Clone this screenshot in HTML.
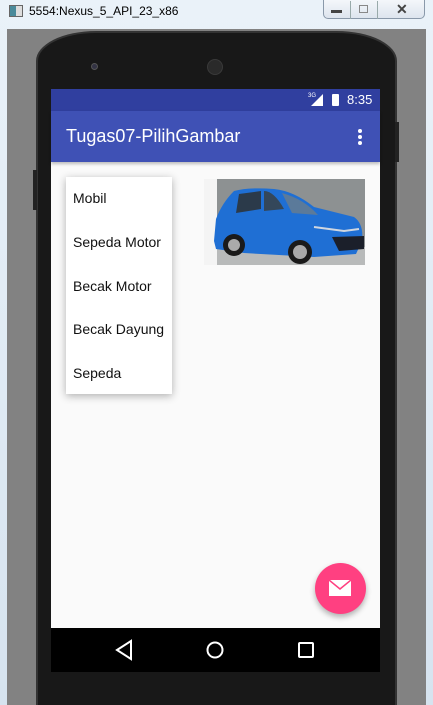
<!DOCTYPE html>
<html><head><style>
*{margin:0;padding:0;box-sizing:border-box}
html,body{width:433px;height:705px;overflow:hidden}
body{background:#dfe9f2;font-family:"Liberation Sans",sans-serif;position:relative}
.abs{position:absolute}
</style></head><body>
<div class="abs" style="left:0;top:0;width:433px;height:705px;background:linear-gradient(#eaf2f9,#d6e3ef);"></div>
<div class="abs" style="left:9px;top:5px;width:14px;height:12px;border:1px solid #666;background:linear-gradient(90deg,#4a8a9a 50%,#ddd 50%)"></div>
<div class="abs" style="left:29px;top:4px;font-size:12px;color:#000">5554:Nexus_5_API_23_x86</div>
<div class="abs" style="left:323px;top:0;width:102px;height:19px;border:1px solid #8a99aa;border-top:none;border-radius:0 0 5px 5px;background:linear-gradient(#f4f7fa,#dde5ee)"></div>
<div class="abs" style="left:350px;top:1px;width:1px;height:18px;background:#9aa"></div>
<div class="abs" style="left:377px;top:1px;width:1px;height:18px;background:#9aa"></div>
<div class="abs" style="left:331px;top:10px;width:11px;height:3px;background:#444"></div>
<div class="abs" style="left:359px;top:5px;width:9px;height:8px;border:1px solid #888"></div>
<div class="abs" style="left:396px;top:1px;font-size:14px;color:#444;font-weight:bold">✕</div>
<div class="abs" style="left:7px;top:29px;width:419px;height:676px;background:#828282"></div>
<div class="abs" style="left:36px;top:31px;width:361px;height:674px;background:#181818;border-radius:60px 60px 0 0/30px 30px 0 0;border:2px solid #333;border-bottom:none"></div>
<div class="abs" style="left:33px;top:170px;width:4px;height:40px;background:#222"></div>
<div class="abs" style="left:395px;top:122px;width:4px;height:40px;background:#222"></div>
<div class="abs" style="left:91px;top:63px;width:7px;height:7px;border-radius:50%;background:#334;border:1px solid #555"></div>
<div class="abs" style="left:207px;top:59px;width:16px;height:16px;border-radius:50%;background:#2a2a2a;border:1px solid #3a3a3a"></div>
<div class="abs" style="left:51px;top:89px;width:329px;height:539px;background:#fafafa"></div>
<div class="abs" style="left:51px;top:89px;width:329px;height:22px;background:#303f9f"></div>
<div class="abs" style="left:308px;top:93px;font-size:6px;color:#fff">3G</div>
<svg class="abs" style="left:311px;top:94px" width="12" height="12"><polygon points="12,0 12,12 0,12" fill="#fff"/></svg>
<div class="abs" style="left:332px;top:94px;width:7px;height:12px;background:#fff;border-radius:1px"></div>
<div class="abs" style="left:347px;top:92px;font-size:13px;color:#fff">8:35</div>
<div class="abs" style="left:51px;top:111px;width:329px;height:51px;background:#3f51b5;box-shadow:0 2px 3px rgba(0,0,0,.25)"></div>
<div class="abs" style="left:66px;top:126px;font-size:18px;color:#fff">Tugas07-PilihGambar</div>
<div class="abs" style="left:358px;top:129px;width:4px;height:4px;border-radius:50%;background:#fff;box-shadow:0 6px 0 #fff,0 12px 0 #fff"></div>
<div class="abs" style="left:66px;top:177px;width:106px;height:217px;background:#fff;box-shadow:0 2px 8px rgba(0,0,0,.3)"></div>
<div class="abs" style="left:73px;top:177px;font-size:14px;color:#111;line-height:43.8px">Mobil<br>Sepeda Motor<br>Becak Motor<br>Becak Dayung<br>Sepeda</div>
<svg class="abs" style="left:204px;top:179px" width="161" height="86" viewBox="0 0 161 86">
<rect width="161" height="86" fill="#f4f4f4"/>
<rect x="13" y="0" width="148" height="76" fill="#8d9192"/>
<rect x="13" y="68" width="148" height="18" fill="#b8baba"/>
<path d="M10,62 L12,40 Q18,24 30,12 Q45,8 70,10 Q90,12 110,28 L150,38 Q160,45 158,62 L152,75 L110,78 L40,74 L12,70 Z" fill="#1f6fd4"/>
<path d="M35,15 L57,12 L57,30 L32,34 Z" fill="#2b3a4a"/>
<path d="M60,12 Q70,12 80,30 L60,32 Z" fill="#34475a"/>
<path d="M78,14 Q100,20 114,36 L88,34 Z" fill="#5b7a9a"/>
<path d="M110,48 L140,52 L155,50" stroke="#cfd6e0" stroke-width="2" fill="none"/>
<circle cx="30" cy="66" r="11" fill="#1a1a1a"/><circle cx="30" cy="66" r="6" fill="#aaa"/>
<circle cx="96" cy="73" r="12" fill="#1a1a1a"/><circle cx="96" cy="73" r="7" fill="#aaa"/>
<path d="M128,58 L160,57 L160,70 L135,72 Z" fill="#1b1f2a"/>
</svg>
<div class="abs" style="left:315px;top:563px;width:51px;height:51px;border-radius:50%;background:#ff4081;box-shadow:0 3px 6px rgba(0,0,0,.3)"></div>
<svg class="abs" style="left:329px;top:580px" width="22" height="16"><rect width="22" height="16" fill="#fff"/><path d="M0,0 L11,9 L22,0" fill="none" stroke="#ff4081" stroke-width="1.5"/></svg>
<div class="abs" style="left:51px;top:628px;width:329px;height:44px;background:#000"></div>
<svg class="abs" style="left:110px;top:638px" width="220" height="24"><polygon points="7,12 21,3 21,21" fill="none" stroke="#fff" stroke-width="2"/><circle cx="105" cy="12" r="7.5" fill="none" stroke="#fff" stroke-width="2"/><rect x="189" y="5" width="14" height="14" rx="1" fill="none" stroke="#fff" stroke-width="2"/></svg>
</body></html>
